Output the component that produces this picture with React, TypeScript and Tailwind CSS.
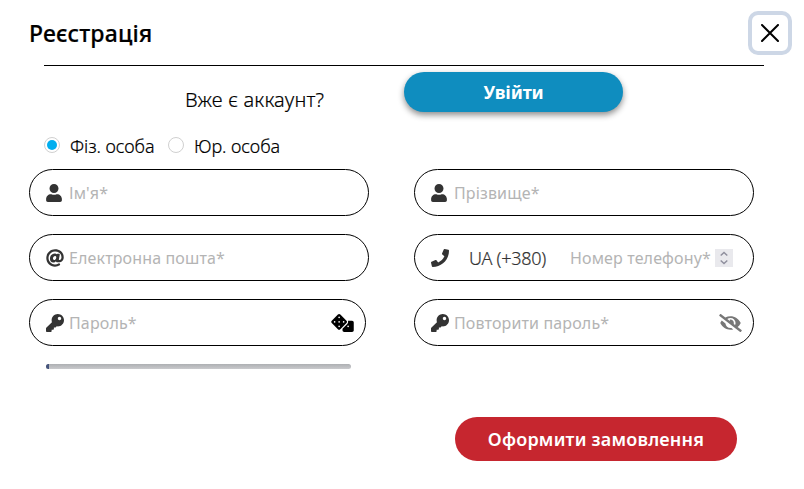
import React, { useState } from "react";
import { FaAt, FaDice, FaEyeSlash, FaKey, FaPhone, FaUser } from "react-icons/fa";

const fieldClass = "flex h-[47px] items-center rounded-full border border-black pl-4";
const inputClass =
  "w-full min-w-0 bg-transparent text-base leading-6 tracking-[0.14px] text-[#333] outline-none placeholder:text-[#b4b4b4]";

interface FieldProps {
  icon: React.ReactNode;
  placeholder: string;
  type?: string;
  className?: string;
  children?: React.ReactNode;
}

function Field({ icon, placeholder, type = "text", className = "w-[340px]", children }: FieldProps) {
  return (
    <div className={`${fieldClass} ${className}`}>
      <span className="flex w-[23px] shrink-0 text-lg text-[#333]">{icon}</span>
      <input type={type} placeholder={placeholder} className={inputClass} />
      {children}
    </div>
  );
}

interface RadioProps {
  label: string;
  checked: boolean;
  onChange: () => void;
}

function Radio({ label, checked, onChange }: RadioProps) {
  return (
    <label className="flex items-start gap-[10px]">
      <input type="radio" name="person" checked={checked} onChange={onChange} className="sr-only" />
      <span className="mt-1 flex size-4 items-center justify-center rounded-full border border-[#d0d0d0] bg-white">
        {checked && <span className="size-[10px] rounded-full bg-[#00aeef]" />}
      </span>
      <span className="w-[84px] pt-px text-lg leading-6 tracking-[-0.06px] whitespace-nowrap [-webkit-text-stroke:0.2px]">
        {label}
      </span>
    </label>
  );
}

export default function App() {
  const [person, setPerson] = useState("individual");

  return (
    <div className="h-[489px] w-[804px] overflow-hidden bg-white font-['Noto_Sans',sans-serif] font-light text-black">
      <header className="flex h-[65px] items-start justify-between pt-[11px] pr-3 pl-[29px]">
        <h1 className="pt-[6px] text-[23px] leading-8 font-medium tracking-[0.16px] [-webkit-text-stroke:0.2px]">
          Реєстрація
        </h1>
        <button
          type="button"
          aria-label="Закрити"
          className="flex size-11 items-center justify-center rounded-[10px] border-4 border-[#cdd7e6]"
        >
          <svg viewBox="0 0 18 18" className="size-[18px]" fill="none" stroke="black" strokeWidth="2" strokeLinecap="round">
            <path d="M1 1l16 16M17 1L1 17" />
          </svg>
        </button>
      </header>
      <div className="ml-11 h-px w-[720px] bg-black" />

      <div className="flex pt-[6px] pl-[185px]">
        <p className="w-[219px] pt-[14px] text-xl leading-7 tracking-[0.17px] [-webkit-text-stroke:0.2px]">
          Вже є аккаунт?
        </p>
        <button
          type="button"
          className="h-10 w-[219px] rounded-full bg-[#0f8dbf] text-lg font-bold tracking-[-0.15px] text-white shadow-[0_3px_6px_rgba(0,0,0,0.45)]"
        >
          Увійти
        </button>
      </div>

      <div className="flex h-[55px] items-start gap-[14px] pt-[19px] pl-11">
        <Radio label="Фіз. особа" checked={person === "individual"} onChange={() => setPerson("individual")} />
        <Radio label="Юр. особа" checked={person === "company"} onChange={() => setPerson("company")} />
      </div>

      <form className="font-normal">
        <div className="grid grid-cols-[340px_340px] gap-x-[45px] gap-y-[18px] pl-[29px]">
          <Field icon={<FaUser className="-ml-px" />} placeholder="Ім'я*" />
          <Field icon={<FaUser className="-ml-px" />} placeholder="Прізвище*" />
          <Field icon={<FaAt />} placeholder="Електронна пошта*" type="email" />
          <div className={`${fieldClass} w-[340px]`}>
            <FaPhone className="size-[18px] shrink-0 text-[#333]" />
            <span className="ml-5 w-[101px] shrink-0 text-lg font-light tracking-[-0.3px] text-[#333] [-webkit-text-stroke:0.2px]">
              UA (+380)
            </span>
            <input type="text" placeholder="Номер телефону*" className={inputClass} />
            <span className="mr-5 flex h-[18px] w-[18px] shrink-0 items-center justify-center bg-[#e9e9ed]">
              <svg viewBox="0 0 18 18" className="size-[18px]" fill="none" stroke="#8f8f9d" strokeWidth="1.4">
                <path d="M5.7 6.6L9 3.5l3.3 3.1M5.7 11.4L9 14.5l3.3-3.1" />
              </svg>
            </span>
          </div>
          <Field icon={<FaKey />} placeholder="Пароль*" type="password" className="w-[337px]">
            <FaDice className="mr-[11px] h-[18px] w-[23px] shrink-0" />
          </Field>
          <Field icon={<FaKey />} placeholder="Повторити пароль*" type="password">
            <FaEyeSlash className="mr-[11px] h-[18px] w-[23px] shrink-0 text-[#777]" />
          </Field>
        </div>

        {/* Password strength */}
        <div className="mt-[18px] ml-[46px] h-[5px] w-[305px] overflow-hidden rounded-full bg-linear-to-b from-[#aeb0b3] to-[#c9cacd]">
          <div className="h-full w-[3px] bg-[#46557c]" />
        </div>

        <button
          type="submit"
          className="mt-12 ml-[455px] h-11 w-[282px] rounded-full bg-[#c6262f] text-lg font-semibold tracking-[0.2px] text-white"
        >
          Оформити замовлення
        </button>
      </form>
    </div>
  );
}
